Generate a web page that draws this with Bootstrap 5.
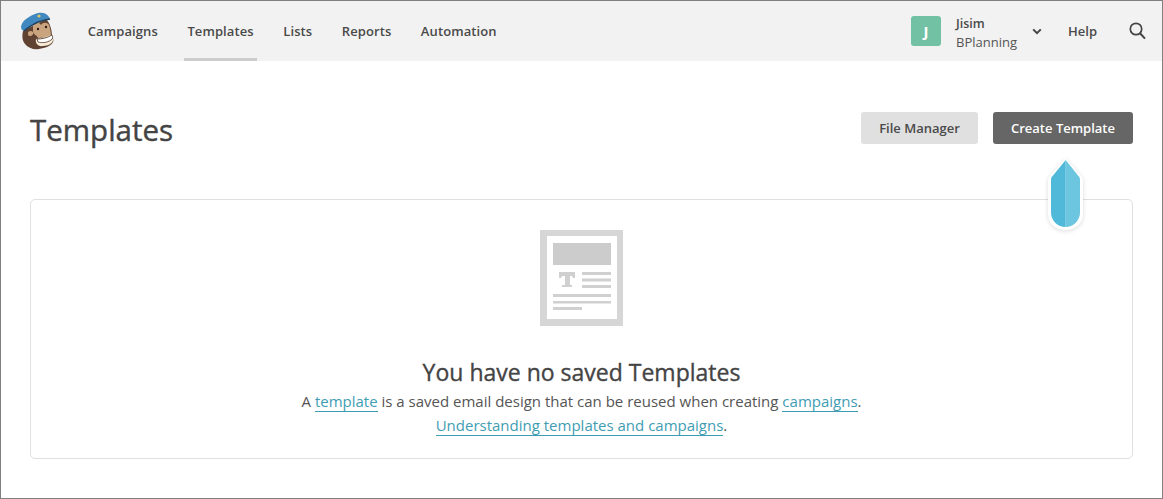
<!DOCTYPE html>
<html lang="en">
<head>
<meta charset="utf-8">
<title>Templates</title>
<link href="https://cdn.jsdelivr.net/npm/bootstrap@5.3.0/dist/css/bootstrap.min.css" rel="stylesheet">
<style>
html,body{height:499px;overflow:hidden}
body{font-family:"Open Sans",sans-serif;color:#444;background:#fff}
.frame{height:499px;border:1px solid #808080;position:relative}
.topbar{height:60px;background:#f2f2f2;padding:0 16px 0 19px}
.topbar .logo{width:34px;height:38px;margin-right:19px}
.tnav a{display:flex;align-items:center;height:60px;padding:2px 3px 0;margin:0 11.750px;color:#4a4a4a;font-size:13px;font-weight:600;letter-spacing:.1px;text-decoration:none;border-bottom:3px solid transparent;border-top:3px solid transparent}
.tnav a.on{border-bottom-color:#ccc}
.avatar{width:30px;height:30px;border-radius:3px;background:#72c1a5;color:#fff;font-weight:700;font-size:15px;margin-right:15px}
.acct{line-height:19px;width:76px;margin-top:3px}
.acct b{font-weight:600;display:block;color:#4a4a4a;font-size:12.500px}
.acct span{color:#555;font-size:13px;display:block}
.helplink{font-size:13px;font-weight:600;color:#4a4a4a;text-decoration:none;margin-left:26px;margin-right:32px;padding-top:2px}
.pagewrap{padding:0 29px}
.headrow{padding-top:51px;height:138px}
.headrow h1{font-size:29.500px;font-weight:400;-webkit-text-stroke:.4px #444;color:#444;margin:-2px 0 0;line-height:40px}
.mcbtn{height:32px;border:0;border-radius:3px;font-size:13px;font-weight:600;display:flex;align-items:center;justify-content:center;padding:1px 0 0}
.mcbtn.light{width:117px;background:#e0e0e0;color:#4a4a4a;margin-right:15px}
.mcbtn.dark{width:140px;background:#666;color:#fff}
.emptybox{height:260px;border:1px solid #e0e0e0;border-radius:5px;text-align:center;padding-top:30px}
.emptybox h2{font-size:23px;font-weight:400;-webkit-text-stroke:.35px #444;color:#444;margin:30px 0 0;line-height:32px}
.emptybox p{font-size:15px;line-height:24px;color:#555;margin:0;position:relative;top:1px}
.emptybox a{color:#3f9db3;text-decoration:none;border-bottom:1px solid #3f9db3}
.pin{position:absolute;left:1047px;top:157px;filter:drop-shadow(0 1px 2px rgba(0,0,0,.14))}
</style>
</head>
<body>
<div class="frame">
  <div class="topbar d-flex align-items-center">
    <svg class="logo" viewBox="0 0 34 38" aria-hidden="true">
      <path d="M3 19c-1 5-1 9 2 13 3 4 9 6 14 5 6-1 12-3 14-7 1-2 0-4-1-5 0-7-2-14-6-18z" fill="#5f4232"/>
      <path d="M13 13c3-3 6-3 8 0 2-3 6-3 8 0 1 3 2 7 2 12l-13 1c-1-3-4-3-5-6 0-2 0-5 0-7z" fill="#c9a47e"/>
      <path d="M8 21c0-2 3-3 5-1 1 2-1 4-3 4s-2-1-2-3z" fill="#c9a47e"/>
      <path d="M16 27c-1 4 2 8 7 7 5 0 10-3 10-6 0-3-1-5-2-5-5 2-10 3-15 4z" fill="#f7ecd8"/>
      <path d="M17 27c5 0 10-1 15-4 1 2 1 4-1 5-4 3-10 3-13 2z" fill="#fff" stroke="#4a3226" stroke-width=".8"/>
      <circle cx="18" cy="17" r="1.200" fill="#2b1c14"/><circle cx="26" cy="15" r="1.200" fill="#2b1c14"/>
      <path d="M1 15c0-2 2-6 5-8 4-3 8-5 12-6 4-1 9 0 11 4l1 2c-6 1-12 3-17 6-3 2-7 4-9 6-2-1-3-2-3-4z" fill="#3f88c0"/>
      <path d="M4 19c3-3 7-5 10-7 5-3 10-4 16-5" fill="none" stroke="#23445f" stroke-width="1.500"/>
      <circle cx="19" cy="4" r="1.600" fill="#dfc765"/>
    </svg>
    <nav class="tnav d-flex">
      <a href="#">Campaigns</a>
      <a href="#" class="on">Templates</a>
      <a href="#">Lists</a>
      <a href="#">Reports</a>
      <a href="#">Automation</a>
    </nav>
    <div class="ms-auto d-flex align-items-center">
      <div class="avatar d-flex align-items-center justify-content-center">J</div>
      <div class="acct"><b>Jisim</b><span>BPlanning</span></div>
      <svg width="10" height="7" viewBox="0 0 10 7" aria-hidden="true"><path d="M1.200 1.400 5 5.200l3.800-3.800" fill="none" stroke="#444" stroke-width="2"/></svg>
      <a href="#" class="helplink">Help</a>
      <svg width="17" height="18" viewBox="0 0 17 18" aria-hidden="true"><circle cx="7" cy="7" r="5.700" fill="none" stroke="#444" stroke-width="1.700"/><path d="M11 11.200 16 16.600" stroke="#444" stroke-width="2" fill="none"/></svg>
    </div>
  </div>
  <main class="pagewrap">
    <div class="headrow d-flex justify-content-between align-items-start">
      <h1>Templates</h1>
      <div class="d-flex">
        <button class="mcbtn light">File Manager</button>
        <button class="mcbtn dark">Create Template</button>
      </div>
    </div>
    <section class="emptybox">
      <svg width="83" height="96" viewBox="0 0 83 96" aria-hidden="true">
        <path fill="#d6d6d6" fill-rule="evenodd" d="M0 0h83v96H0zM7 6v83h70V6z"/>
        <rect x="13" y="13" width="58" height="22" fill="#ccc"/>
        <path fill="#d0d0d0" d="M19 42h16v6h-2l-1-2h-2v9h2v2h-10v-2h3v-9h-3l-1 2h-2zM42 42h29v3H42zM42 48.500h29v3H42zM42 55h29v3H42zM13 64h58v3H13zM13 71h58v2.500H13zM13 77h29v3H13z"/>
      </svg>
      <h2>You have no saved Templates</h2>
      <p>A <a href="#">template</a> is a saved email design that can be reused when creating <a href="#">campaigns</a>.</p>
      <p><a href="#">Understanding templates and campaigns</a>.</p>
    </section>
  </main>
  <svg class="pin" width="36" height="74" viewBox="0 0 36 74" aria-hidden="true">
    <path d="M17.700 0 2 18a6 6 0 0 0-2 5v33c0 10 8 16 17.500 16S35 66 35 56V23a6 6 0 0 0-2-5z" fill="#fff"/>
    <path d="M17.700 2 5 17.500a5 5 0 0 0-2 4V54.500C3 63 10 69 17.700 69z" fill="#50b8d8"/>
    <path d="M17.700 2 30 17.500a5 5 0 0 1 2 4V54.500C32 63 25 69 17.700 69z" fill="#6cc6e0"/>
  </svg>
</div>
</body>
</html>
